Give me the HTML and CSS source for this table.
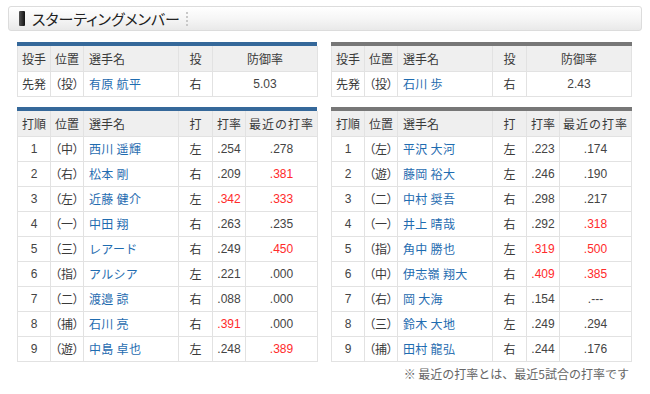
FILE: index.html
```html
<!DOCTYPE html>
<html lang="ja">
<head>
<meta charset="utf-8">
<title>スターティングメンバー</title>
<link rel="stylesheet" href="styles.css">
</head>
<body>
<div class="page">
  <div class="titlebar">
    <span class="marker"></span>
    <span class="title">スターティングメンバー</span>
    <span class="sep"></span>
  </div>
  <div class="content">
    <div class="grid">
      <div class="tbl blue">
        <table>
          <colgroup><col class="w1"><col class="w2"><col class="w3"><col class="w4"><col class="w5"><col class="w6"></colgroup>
          <tr class="hd"><th>投手</th><th>位置</th><th class="l">選手名</th><th>投</th><th colspan="2">防御率</th></tr>
          <tr><td>先発</td><td class="pos">（投）</td><td class="name">有原 航平</td><td>右</td><td colspan="2" class="num">5.03</td></tr>
        </table>
      </div>
      <div class="tbl gray">
        <table>
          <colgroup><col class="w1"><col class="w2"><col class="w3"><col class="w4"><col class="w5"><col class="w6"></colgroup>
          <tr class="hd"><th>投手</th><th>位置</th><th class="l">選手名</th><th>投</th><th colspan="2">防御率</th></tr>
          <tr><td>先発</td><td class="pos">（投）</td><td class="name">石川 歩</td><td>右</td><td colspan="2" class="num">2.43</td></tr>
        </table>
      </div>
      <div class="tbl blue">
        <table>
          <colgroup><col class="w1"><col class="w2"><col class="w3"><col class="w4"><col class="w5"><col class="w6"></colgroup>
          <tr class="hd"><th>打順</th><th>位置</th><th class="l">選手名</th><th>打</th><th>打率</th><th class="wide">最近の打率</th></tr>
          <tr><td class="num">1</td><td class="pos">（中）</td><td class="name">西川 遥輝</td><td>左</td><td class="num">.254</td><td class="num">.278</td></tr>
          <tr><td class="num">2</td><td class="pos">（右）</td><td class="name">松本 剛</td><td>右</td><td class="num">.209</td><td class="num red">.381</td></tr>
          <tr><td class="num">3</td><td class="pos">（左）</td><td class="name">近藤 健介</td><td>左</td><td class="num red">.342</td><td class="num red">.333</td></tr>
          <tr><td class="num">4</td><td class="pos">（一）</td><td class="name">中田 翔</td><td>右</td><td class="num">.263</td><td class="num">.235</td></tr>
          <tr><td class="num">5</td><td class="pos">（三）</td><td class="name">レアード</td><td>右</td><td class="num">.249</td><td class="num red">.450</td></tr>
          <tr><td class="num">6</td><td class="pos">（指）</td><td class="name">アルシア</td><td>左</td><td class="num">.221</td><td class="num">.000</td></tr>
          <tr><td class="num">7</td><td class="pos">（二）</td><td class="name">渡邉 諒</td><td>右</td><td class="num">.088</td><td class="num">.000</td></tr>
          <tr><td class="num">8</td><td class="pos">（捕）</td><td class="name">石川 亮</td><td>右</td><td class="num red">.391</td><td class="num">.000</td></tr>
          <tr><td class="num">9</td><td class="pos">（遊）</td><td class="name">中島 卓也</td><td>左</td><td class="num">.248</td><td class="num red">.389</td></tr>
        </table>
      </div>
      <div class="tbl gray">
        <table>
          <colgroup><col class="w1"><col class="w2"><col class="w3"><col class="w4"><col class="w5"><col class="w6"></colgroup>
          <tr class="hd"><th>打順</th><th>位置</th><th class="l">選手名</th><th>打</th><th>打率</th><th class="wide">最近の打率</th></tr>
          <tr><td class="num">1</td><td class="pos">（左）</td><td class="name">平沢 大河</td><td>左</td><td class="num">.223</td><td class="num">.174</td></tr>
          <tr><td class="num">2</td><td class="pos">（遊）</td><td class="name">藤岡 裕大</td><td>左</td><td class="num">.246</td><td class="num">.190</td></tr>
          <tr><td class="num">3</td><td class="pos">（二）</td><td class="name">中村 奨吾</td><td>右</td><td class="num">.298</td><td class="num">.217</td></tr>
          <tr><td class="num">4</td><td class="pos">（一）</td><td class="name">井上 晴哉</td><td>右</td><td class="num">.292</td><td class="num red">.318</td></tr>
          <tr><td class="num">5</td><td class="pos">（指）</td><td class="name">角中 勝也</td><td>左</td><td class="num red">.319</td><td class="num red">.500</td></tr>
          <tr><td class="num">6</td><td class="pos">（中）</td><td class="name">伊志嶺 翔大</td><td>右</td><td class="num red">.409</td><td class="num red">.385</td></tr>
          <tr><td class="num">7</td><td class="pos">（右）</td><td class="name">岡 大海</td><td>右</td><td class="num">.154</td><td class="num">.---</td></tr>
          <tr><td class="num">8</td><td class="pos">（三）</td><td class="name">鈴木 大地</td><td>左</td><td class="num">.249</td><td class="num">.294</td></tr>
          <tr><td class="num">9</td><td class="pos">（捕）</td><td class="name">田村 龍弘</td><td>右</td><td class="num">.244</td><td class="num">.176</td></tr>
        </table>
      </div>
    </div>
    <p class="note">※ 最近の打率とは、最近5試合の打率です</p>
  </div>
</div>
</body>
</html>
```
FILE: styles.css
```css
html, body {
  margin: 0;
  padding: 0;
  background: #fff;
}
body {
  font-family: "Liberation Sans", "Noto Sans CJK JP", sans-serif;
  color: #333;
  font-size: 12px;
}
.page {
  padding: 6px 8px 0 8px;
}
.titlebar {
  box-sizing: border-box;
  width: 634px;
  height: 25px;
  border: 1px solid #dcdcdc;
  border-radius: 3px;
  background: linear-gradient(#ffffff, #f6f6f6 50%, #e9e9e9);
  display: flex;
  align-items: center;
  padding-left: 10px;
}
.marker {
  width: 6px;
  height: 15px;
  background: linear-gradient(90deg, #555, #111);
  border-radius: 1px;
}
.title {
  margin-left: 7px;
  font-family: "Noto Sans CJK JP", sans-serif;
  font-size: 15px;
  font-feature-settings: "palt";
  color: #222;
  line-height: 1;
}
.sep {
  margin-left: 6px;
  width: 0;
  height: 14px;
  border-left: 2px dotted #c8c8c8;
}
.content {
  padding: 11px 10px 0 9px;
}
.grid {
  display: grid;
  grid-template-columns: 300px 301px;
  column-gap: 14px;
  row-gap: 10px;
}
.tbl {
  border-top: 4px solid #35689a;
}
.tbl.gray {
  border-top-color: #777;
}
table {
  width: 100%;
  table-layout: fixed;
  border-collapse: collapse;
}
.w1 { width: 33px; }
.w2 { width: 33px; }
.w3 { width: 95px; }
.w4 { width: 34px; }
.w5 { width: 33px; }
.w6 { width: 72px; }
th, td {
  border: 1px solid #e2e2e2;
  text-align: center;
  padding: 0;
  white-space: nowrap;
  font-family: "Noto Sans CJK JP", sans-serif;
  font-weight: normal;
  font-size: 12px;
  color: #3a3a3a;
  height: 24px;
  line-height: 16px;
}
tr:first-child th { border-top: 0; }
.hd th {
  background: #efefef;
  height: 25px;
}
th.l {
  text-align: left;
  padding-left: 5px;
}
th.wide {
  letter-spacing: 1px;
}
td.pos {
  font-feature-settings: "palt";
}
td.name {
  text-align: left;
  padding-left: 5px;
  color: #1f6cb0;
  letter-spacing: 0.3px;
}
td.num {
  font-family: "Liberation Sans", sans-serif;
  color: #444;
}
td.red {
  color: #ff2b2b;
}
.note {
  margin: 3px 3px 0 0;
  text-align: right;
  font-family: "Noto Sans CJK JP", sans-serif;
  font-size: 12px;
  color: #666;
}
```
